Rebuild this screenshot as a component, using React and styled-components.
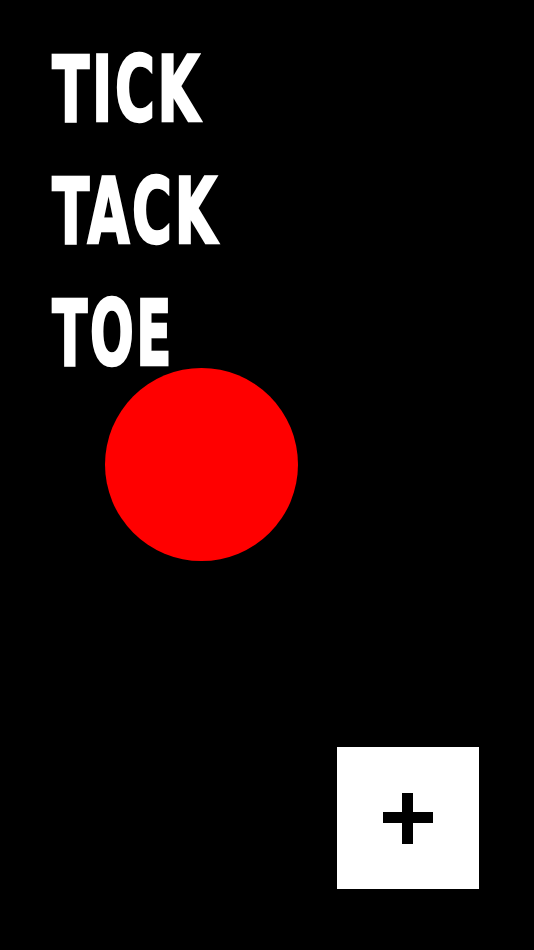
import React from "react";
import styled, { createGlobalStyle } from "styled-components";

const Global = createGlobalStyle`
  html, body { margin: 0; padding: 0; background: #000; }
  body { font-family: "DejaVu Sans Condensed", "DejaVu Sans", sans-serif; }
`;

const Page = styled.main`
  height: 100vh;
  box-sizing: border-box;
  display: flex;
  flex-direction: column;
  padding: 29px 55px 61px 52px;
  background: #000;
  overflow: hidden;
`;

const Title = styled.h1`
  margin: 0;
  font-family: "DejaVu Sans Condensed", "DejaVu Sans", sans-serif;
  font-weight: 700;
  font-size: 90px;
  line-height: 122px;
  letter-spacing: 4px;
  color: #fff;
  -webkit-text-stroke: 2.5px #fff;
  text-transform: uppercase;
`;

const Line = styled.span`
  display: block;
  white-space: nowrap;
  transform: scaleX(${(p) => p.$squeeze || 0.671});
  transform-origin: 1px 0;
`;

const Circle = styled.div`
  width: 193px;
  height: 193px;
  border-radius: 50%;
  background: #ff0000;
  margin: -27px 0 0 53px;
`;

const AddButton = styled.button`
  margin-top: auto;
  align-self: flex-end;
  width: 142px;
  height: 142px;
  border: none;
  padding: 0;
  background: #fff;
  display: flex;
  align-items: center;
  justify-content: center;
  cursor: pointer;
`;

export default function App() {
  return (
    <>
      <Global />
      <Page>
        <Title>
          <Line>Tick</Line>
          <Line>Tack</Line>
          <Line $squeeze={0.636}>Toe</Line>
        </Title>
        <Circle />
        <AddButton aria-label="Add">
          <svg width="50" height="51" viewBox="0 0 50 51">
            <rect x="0" y="19" width="50" height="11" fill="#000" />
            <rect x="19" y="0" width="11" height="51" fill="#000" />
          </svg>
        </AddButton>
      </Page>
    </>
  );
}
